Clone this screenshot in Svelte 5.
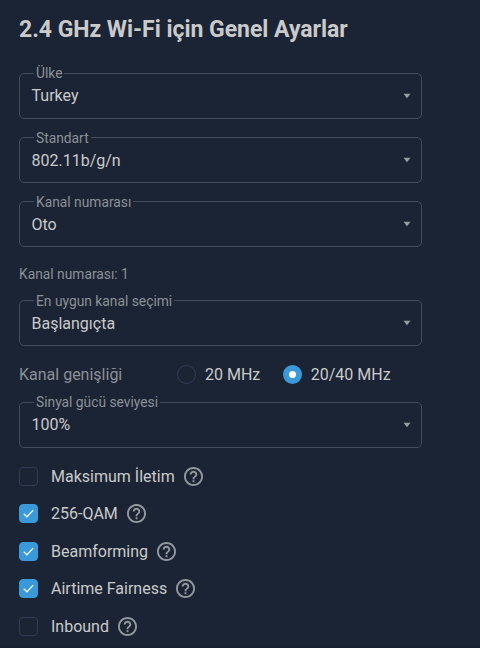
<script>
	let country = $state('Turkey');
	let standard = $state('802.11b/g/n');
	let channel = $state('Oto');
	let selection = $state('Başlangıçta');
	let power = $state('100%');
	let width = $state('20/40 MHz');

	const widths = ['20 MHz', '20/40 MHz'];

	let options = $state([
		{ label: 'Maksimum İletim', checked: false },
		{ label: '256-QAM', checked: true },
		{ label: 'Beamforming', checked: true },
		{ label: 'Airtime Fairness', checked: true },
		{ label: 'Inbound', checked: false }
	]);
</script>

{#snippet select(label, value)}
	<fieldset class="field">
		<legend>{label}</legend>
		<div class="control">
			<span class="text">{value}</span>
			<svg class="arrow" viewBox="0 0 8 6" width="8" height="6">
				<path d="M0.5 0.7h7L4 5.3z" />
			</svg>
		</div>
	</fieldset>
{/snippet}

<main>
	<h1>2.4 GHz Wi-Fi için Genel Ayarlar</h1>

	<div class="fields">
		{@render select('Ülke', country)}
		{@render select('Standart', standard)}
		{@render select('Kanal numarası', channel)}
	</div>

	<p class="current">Kanal numarası: 1</p>
	{@render select('En uygun kanal seçimi', selection)}

	<div class="widths">
		<span class="caption text">Kanal genişliği</span>
		{#each widths as item}
			<label class="radio">
				<input type="radio" name="width" value={item} bind:group={width} />
				<span class="dot"></span>
				<span class="text">{item}</span>
			</label>
		{/each}
	</div>

	{@render select('Sinyal gücü seviyesi', power)}

	<div class="options">
		{#each options as option}
			<div class="option">
				<label>
					<input type="checkbox" bind:checked={option.checked} />
					<span class="box">
						{#if option.checked}
							<svg viewBox="0 0 19 19" width="19" height="19">
								<path d="M4.2 9.8l3.5 3.4 7-7.5" />
							</svg>
						{/if}
					</span>
					<span class="text">{option.label}</span>
				</label>
				<svg class="help" viewBox="2 2 20 20" width="19" height="19">
					<path
						d="M11 18h2v-2h-2v2zm1-16C6.48 2 2 6.48 2 12s4.48 10 10 10 10-4.48 10-10S17.52 2 12 2zm0 18c-4.41 0-8-3.59-8-8s3.59-8 8-8 8 3.59 8 8-3.59 8-8 8zm0-14c-2.21 0-4 1.79-4 4h2c0-1.1.9-2 2-2s2 .9 2 2c0 2-3 1.75-3 5h2c0-2.25 3-2.5 3-5 0-2.21-1.79-4-4-4z"
					/>
				</svg>
			</div>
		{/each}
	</div>
</main>

<style>
	:global(body) {
		margin: 0;
		background: #1b2434;
	}

	main {
		box-sizing: border-box;
		width: 480px;
		height: 648px;
		padding: 15px 57px 0 19px;
		overflow: hidden;
		border-bottom: 2px solid #181d30;
		background: #1b2434;
		color: #cacaca;
		font: 16px/20px Roboto, sans-serif;
	}

	h1 {
		margin: 0 0 19.4px;
		font-size: 23px;
		font-weight: 700;
		line-height: 30px;
		letter-spacing: -0.03px;
		white-space: nowrap;
	}

	.fields {
		display: flex;
		flex-direction: column;
		gap: 9.8px;
	}

	.field {
		box-sizing: border-box;
		width: 403.4px;
		height: 54.5px;
		min-width: 0;
		margin: 0;
		padding: 0 10px 0 11.5px;
		border: 1px solid #434c5a;
		border-radius: 5px;
	}

	legend {
		margin-left: 2.5px;
		padding: 0 2px;
		color: #8b9196;
		font-size: 13.8px;
		line-height: 18px;
	}

	.control {
		display: flex;
		align-items: center;
		justify-content: space-between;
		height: 27px;
	}

	/* Roboto sits slightly high next to the controls */
	.text {
		padding-top: 1px;
	}

	.arrow {
		fill: #969ca2;
	}

	.current {
		margin: 17.1px 0 9px;
		color: #8b9196;
		font-size: 13.8px;
		line-height: 18px;
	}

	.widths {
		display: flex;
		align-items: center;
		height: 20px;
		margin: 18px 0 9px;
	}

	.caption {
		width: 158px;
		color: #8b9196;
	}

	label {
		display: flex;
		align-items: center;
	}

	.radio {
		gap: 9px;
		margin-right: 22.5px;
	}

	input {
		position: absolute;
		opacity: 0;
		pointer-events: none;
	}

	.dot,
	.box {
		box-sizing: border-box;
		flex: none;
		width: 19px;
		height: 19px;
		border: 1px solid #303d56;
	}

	.dot {
		border-radius: 50%;
	}

	input:checked + .dot {
		border: 6px solid #3a9ad9;
		background: #fff;
	}

	.box {
		display: flex;
		align-items: center;
		justify-content: center;
		border-radius: 4px;
	}

	input:checked + .box {
		border-color: #3a9ad9;
		background: #3a9ad9;
	}

	.box path {
		fill: none;
		stroke: #fff;
		stroke-width: 1.4;
	}

	.options {
		display: flex;
		flex-direction: column;
		gap: 17.5px;
		margin-top: 18.6px;
	}

	.option {
		display: flex;
		align-items: center;
		gap: 9px;
		height: 20px;
	}

	.option label {
		gap: 13px;
	}

	.help {
		fill: #92989c;
	}
</style>
